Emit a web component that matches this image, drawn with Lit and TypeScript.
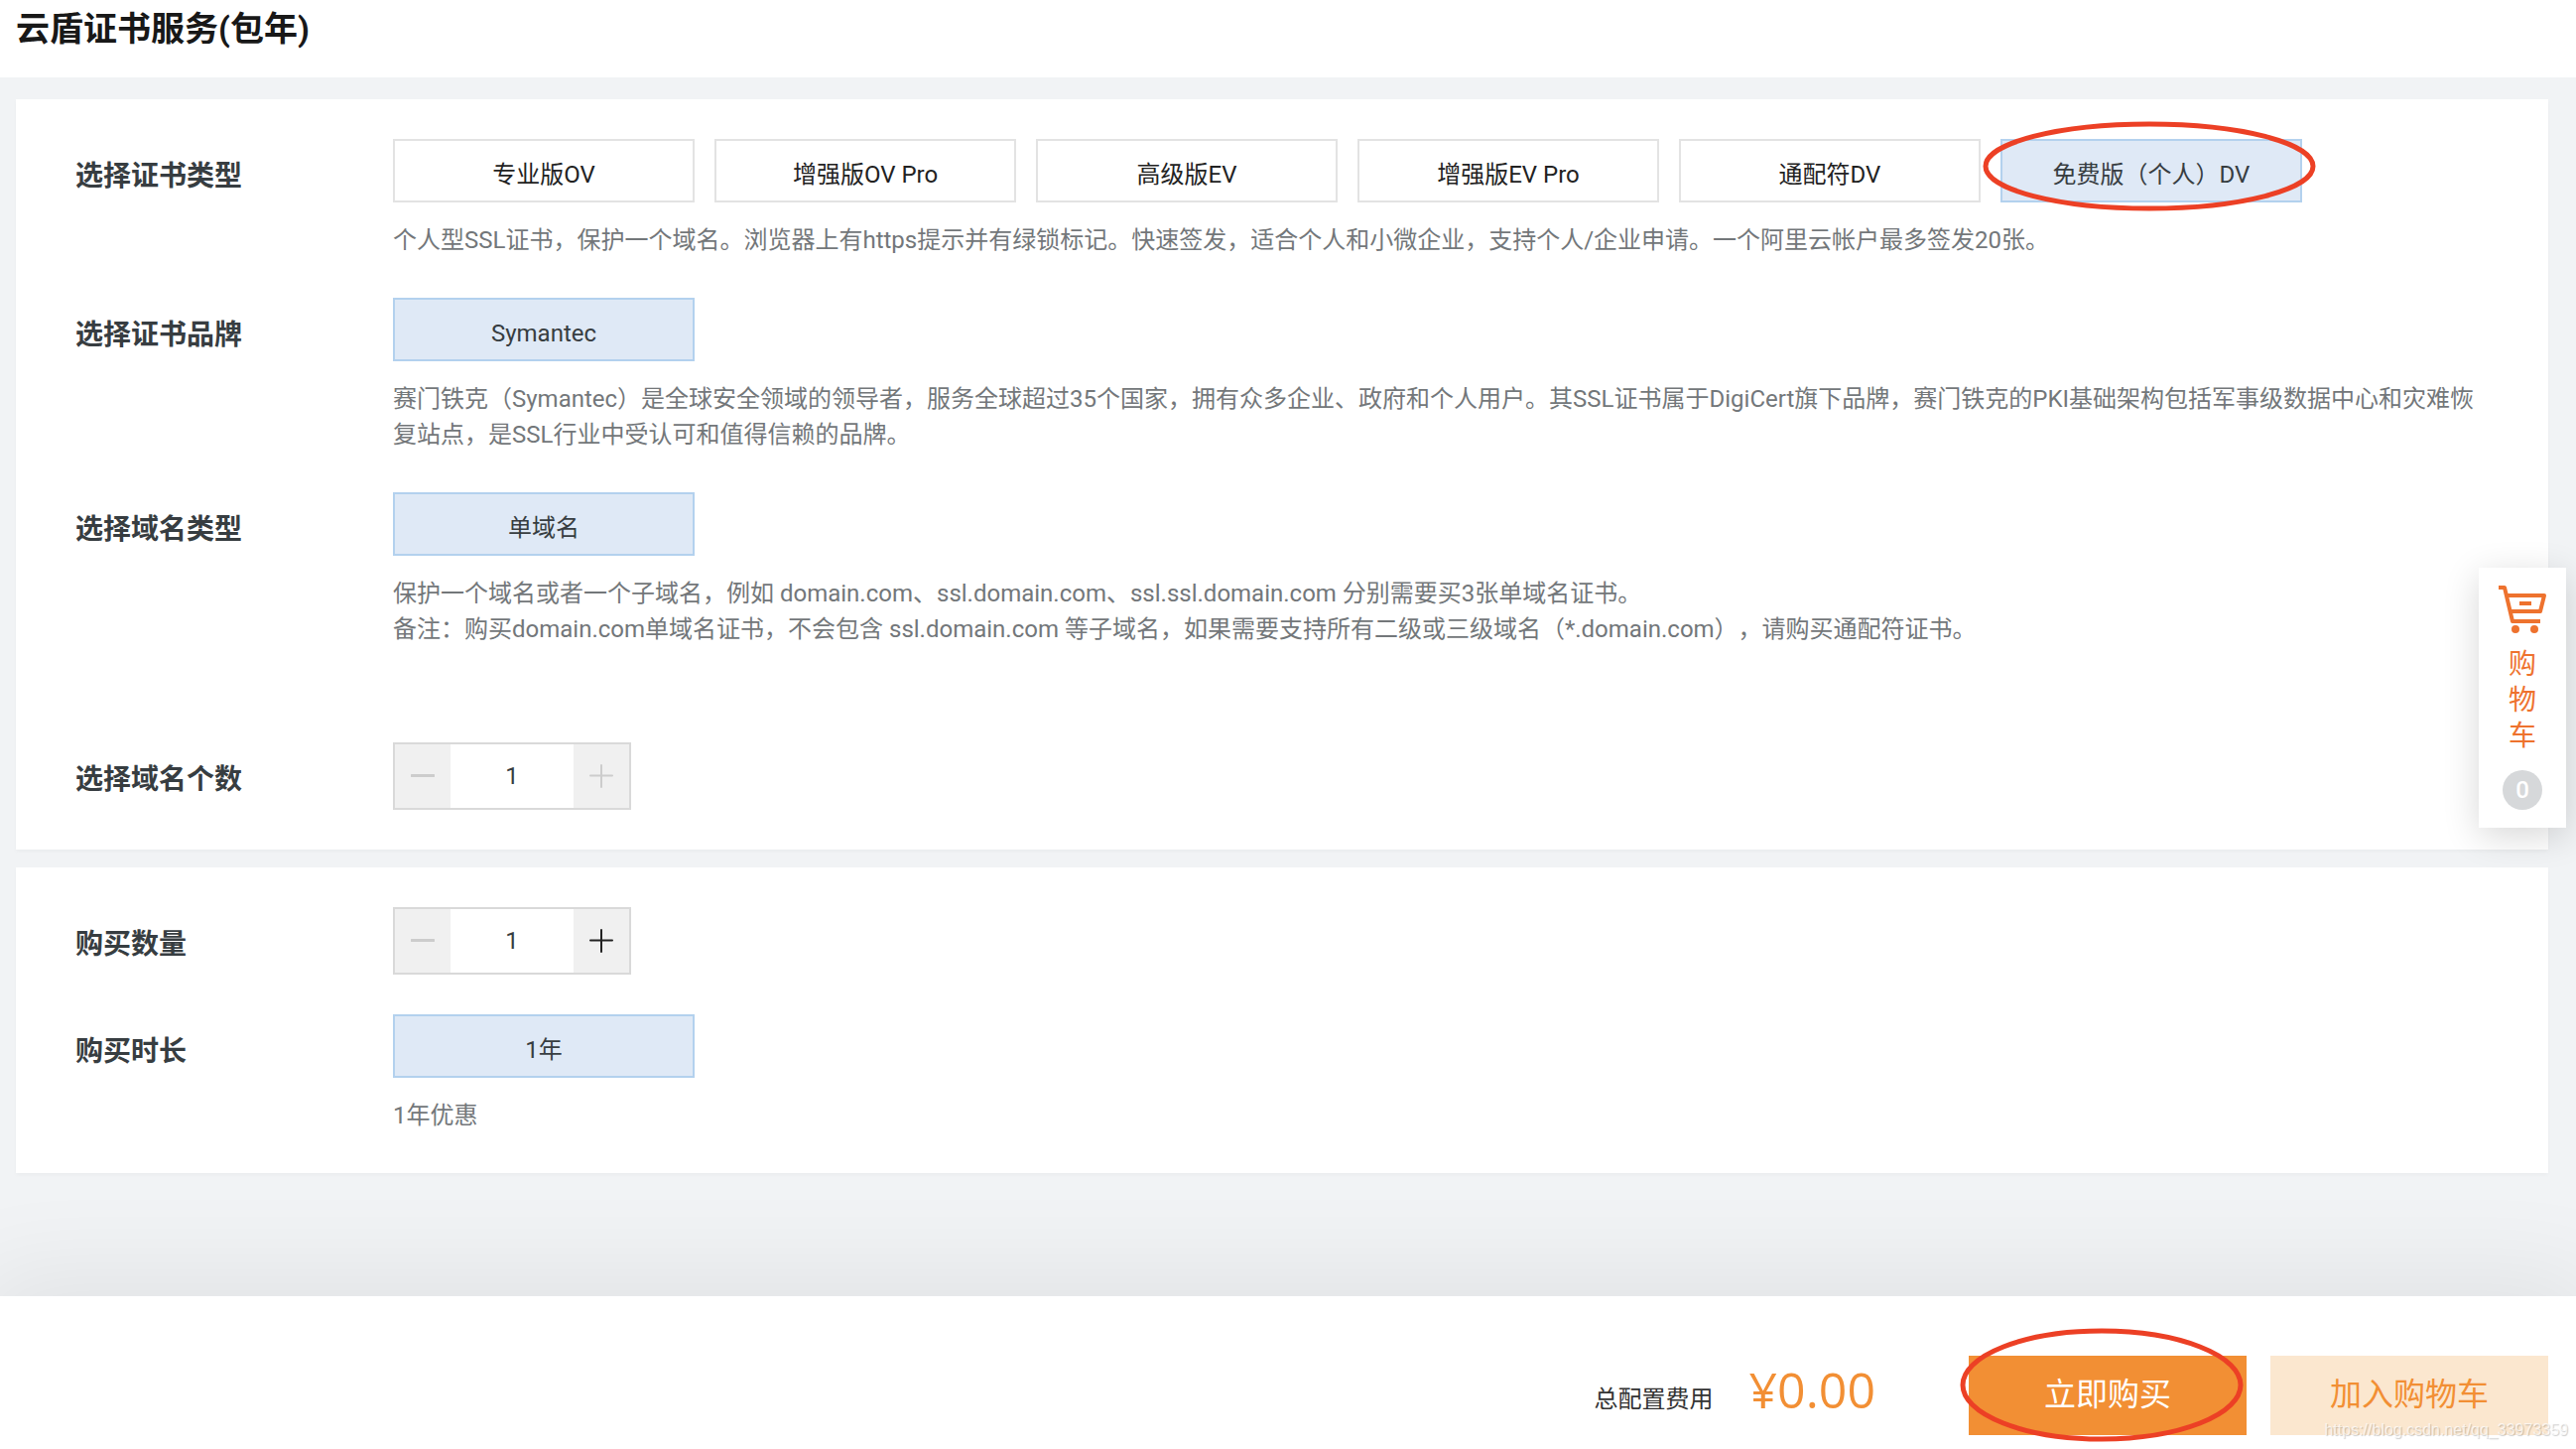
import { LitElement, html, css, svg, nothing } from "lit";
import { customElement, property, state } from "lit/decorators.js";

const fonts = css`Roboto, "Noto Sans CJK SC", sans-serif`;

@customElement("quantity-stepper")
class QuantityStepper extends LitElement {
  @property() label = "";
  @property({ type: Number }) value = 1;
  @property({ type: Number }) max = 99;

  static styles = css`
    :host {
      display: inline-flex;
    }
    .stepper {
      display: flex;
      height: 64px;
      border: 2px solid #d9d9d9;
      background: #fff;
    }
    .step {
      display: flex;
      align-items: center;
      justify-content: center;
      width: 56px;
      padding: 0;
      border: 0;
      background: #f0f0f0;
      color: #222;
      cursor: pointer;
    }
    .step:disabled {
      color: #ccc;
      cursor: default;
    }
    .step svg {
      width: 24px;
      height: 24px;
    }
    .value {
      box-sizing: border-box;
      width: 124px;
      padding: 0;
      border: 0;
      outline: 0;
      background: transparent;
      color: #373d41;
      font: 24px/36px ${fonts};
      text-align: center;
    }
  `;

  private change(by: number) {
    this.value = Math.min(this.max, Math.max(1, this.value + by));
  }

  render() {
    return html`
      <div class="stepper">
        <button class="step" type="button" aria-label="减少" ?disabled=${this.value <= 1} @click=${() => this.change(-1)}>
          <svg viewBox="0 0 24 24" stroke="currentColor" stroke-width="3" stroke-linecap="round"><path d="M1 11.5h22" /></svg>
        </button>
        <input class="value" type="text" inputmode="numeric" aria-label=${this.label} .value=${String(this.value)} />
        <button class="step" type="button" aria-label="增加" ?disabled=${this.value >= this.max} @click=${() => this.change(1)}>
          <svg viewBox="0 0 24 24" stroke="currentColor" stroke-width="2" stroke-linecap="round"><path d="M1 11.5h22M12 1v22" /></svg>
        </button>
      </div>
    `;
  }
}

interface Field {
  label: string;
  options?: string[];
  selected?: number;
  notes?: string[];
  max?: number;
  spaced?: boolean;
  circled?: number;
}

const certificate: Field[] = [
  {
    label: "选择证书类型",
    options: ["专业版OV", "增强版OV Pro", "高级版EV", "增强版EV Pro", "通配符DV", "免费版（个人）DV"],
    selected: 5,
    circled: 5,
    notes: ["个人型SSL证书，保护一个域名。浏览器上有https提示并有绿锁标记。快速签发，适合个人和小微企业，支持个人/企业申请。一个阿里云帐户最多签发20张。"],
  },
  {
    label: "选择证书品牌",
    options: ["Symantec"],
    notes: ["赛门铁克（Symantec）是全球安全领域的领导者，服务全球超过35个国家，拥有众多企业、政府和个人用户。其SSL证书属于DigiCert旗下品牌，赛门铁克的PKI基础架构包括军事级数据中心和灾难恢复站点，是SSL行业中受认可和值得信赖的品牌。"],
  },
  {
    label: "选择域名类型",
    options: ["单域名"],
    notes: [
      "保护一个域名或者一个子域名，例如 domain.com、ssl.domain.com、ssl.ssl.domain.com 分别需要买3张单域名证书。",
      "备注：购买domain.com单域名证书，不会包含 ssl.domain.com 等子域名，如果需要支持所有二级或三级域名（*.domain.com），请购买通配符证书。",
    ],
    spaced: true,
  },
  { label: "选择域名个数", max: 1 },
];

const purchase: Field[] = [
  { label: "购买数量", max: 99 },
  { label: "购买时长", options: ["1年"], notes: ["1年优惠"] },
];

const cartIcon = svg`
  <path d="M0 2H6L14 36H42" />
  <path d="M8 10H46L42 26H12" />
  <path d="M21 18H33" />
  <circle class="wheel" cx="17" cy="44" r="4" />
  <circle class="wheel" cx="36" cy="44" r="4" />
`;

@customElement("app-root")
class AppRoot extends LitElement {
  @state() private choices: Record<string, number> = {};

  static styles = css`
    :host {
      display: flex;
      flex-direction: column;
      min-height: 100vh;
      position: relative;
      overflow: hidden;
      background: #f1f3f5;
      color: #373d41;
      font: 24px/36px ${fonts};
      text-spacing-trim: space-all;
    }
    .header {
      box-sizing: border-box;
      height: 78px;
      padding: 4px 16px;
      background: #fff;
    }
    .title {
      margin: 0;
      color: #181818;
      font-size: 34px;
      line-height: 50px;
      font-weight: 700;
    }
    .main {
      flex: 1;
      display: flex;
      flex-direction: column;
      gap: 18px;
      padding: 22px 28px 40px 16px;
    }
    .card {
      display: flex;
      flex-direction: column;
      gap: 40px;
      padding: 40px 60px;
      background: #fff;
      box-shadow: 0 2px 4px rgba(0, 0, 0, 0.03);
    }
    .field {
      display: grid;
      grid-template-columns: 320px 1fr;
    }
    .spaced {
      padding-bottom: 56px;
    }
    .label {
      padding-top: 16px;
      font-size: 28px;
      line-height: 44px;
      font-weight: 700;
    }
    .options {
      display: flex;
      flex-wrap: wrap;
      gap: 20px;
    }
    .slot {
      position: relative;
      display: flex;
    }
    .option {
      width: 304px;
      height: 64px;
      padding: 8px 0 0;
      border: 2px solid #e3e3e3;
      background: #fff;
      color: #222;
      font: inherit;
      cursor: pointer;
    }
    .selected {
      border-color: #b3d1ee;
      background: #dfe9f6;
      color: #373d41;
    }
    .notes {
      padding-top: 20px;
      color: #73777a;
    }
    .note {
      margin: 0;
    }
    .footer {
      position: relative;
      display: flex;
      align-items: center;
      justify-content: flex-end;
      padding: 60px 28px 14px;
      background: #fff;
      box-shadow: 0 0 100px 20px rgba(0, 0, 0, 0.07);
    }
    .total {
      padding-top: 8px;
      color: #333;
    }
    .price {
      margin: 0 94px 12px 36px;
      color: #f28f34;
      font: 50px/60px "Open Sans", sans-serif;
    }
    .actions {
      display: flex;
      gap: 24px;
    }
    .action {
      width: 280px;
      height: 80px;
      padding: 0 0 2px;
      border: 0;
      background: #f28f34;
      color: #fff;
      font: 32px/48px ${fonts};
      cursor: pointer;
    }
    .secondary {
      background: #fbe7cf;
      color: #f28f34;
    }
    .ring {
      position: absolute;
      fill: none;
      stroke: #ec4025;
      stroke-width: 5;
      overflow: visible;
      pointer-events: none;
    }
    .ring-type {
      left: -18px;
      top: -18px;
      width: 336px;
      height: 91px;
    }
    .ring-buy {
      left: -9px;
      top: -28px;
      width: 286px;
      height: 115px;
    }
    .watermark {
      position: absolute;
      right: 8px;
      bottom: 7px;
      color: rgba(255, 255, 255, 0.7);
      font: 16px/24px "Liberation Sans", sans-serif;
      text-shadow: 1px 1px 1px rgba(0, 0, 0, 0.2);
      pointer-events: none;
    }
    .cart {
      position: absolute;
      right: 10px;
      top: 572px;
      box-sizing: border-box;
      display: flex;
      flex-direction: column;
      align-items: center;
      width: 88px;
      padding: 18px 0;
      background: #fff;
      color: #ee722e;
      box-shadow: 0 8px 36px rgba(0, 0, 0, 0.16);
      text-decoration: none;
    }
    .cart-icon {
      width: 48px;
      height: 48px;
      fill: none;
      stroke: currentColor;
      stroke-width: 4;
      stroke-linejoin: round;
    }
    .wheel {
      fill: currentColor;
      stroke: none;
    }
    .cart-text {
      width: 28px;
      margin: 14px 0 16px;
      font-size: 28px;
      line-height: 36px;
    }
    .count {
      width: 40px;
      border-radius: 50%;
      background: #d6d8da;
      color: #fff;
      font-weight: 500;
      line-height: 40px;
      text-align: center;
    }
  `;

  private renderField(field: Field) {
    const chosen = this.choices[field.label] ?? field.selected ?? 0;
    return html`
      <section class="field ${field.spaced ? "spaced" : ""}">
        <div class="label">${field.label}</div>
        <div>
          ${field.options
            ? html`<div class="options" role="group" aria-label=${field.label}>
                ${field.options.map(
                  (option, i) => html`<div class="slot">
                    <button
                      type="button"
                      class="option ${i === chosen ? "selected" : ""}"
                      aria-pressed=${i === chosen}
                      @click=${() => (this.choices = { ...this.choices, [field.label]: i })}
                    >${option}</button>
                    ${field.circled === i ? this.renderRing("ring-type", 336, 91) : nothing}
                  </div>`
                )}
              </div>`
            : html`<quantity-stepper .label=${field.label} .max=${field.max ?? 99}></quantity-stepper>`}
          ${field.notes
            ? html`<div class="notes">${field.notes.map((note) => html`<p class="note">${note}</p>`)}</div>`
            : nothing}
        </div>
      </section>
    `;
  }

  private renderRing(name: string, w: number, h: number) {
    return html`<svg class="ring ${name}" viewBox="0 0 ${w} ${h}" aria-hidden="true">
      <ellipse cx=${w / 2} cy=${h / 2} rx=${w / 2 - 3} ry=${h / 2 - 3} />
    </svg>`;
  }

  render() {
    return html`
      <header class="header"><h1 class="title">云盾证书服务(包年)</h1></header>
      <main class="main">
        <div class="card">${certificate.map((f) => this.renderField(f))}</div>
        <div class="card">${purchase.map((f) => this.renderField(f))}</div>
      </main>
      <footer class="footer">
        <span class="total">总配置费用</span>
        <span class="price">¥0.00</span>
        <div class="actions">
          <div class="slot">
            <button class="action" type="button">立即购买</button>
            ${this.renderRing("ring-buy", 286, 115)}
          </div>
          <button class="action secondary" type="button">加入购物车</button>
        </div>
        <span class="watermark">https://blog.csdn.net/qq_33973359</span>
      </footer>
      <a class="cart" href="#cart">
        <svg class="cart-icon" viewBox="0 0 48 48" aria-hidden="true">${cartIcon}</svg>
        <span class="cart-text">购物车</span>
        <span class="count">0</span>
      </a>
    `;
  }
}
